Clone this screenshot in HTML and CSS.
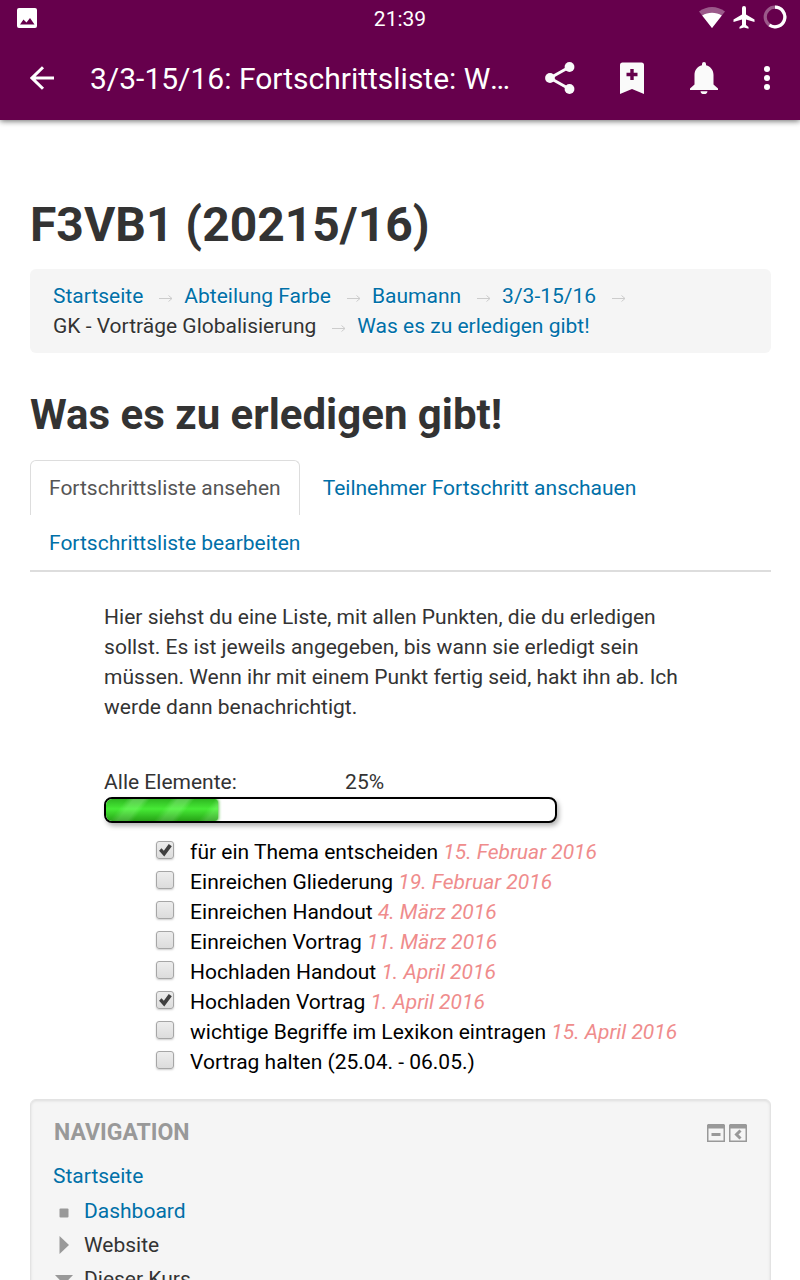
FILE: index.html
```html
<!DOCTYPE html>
<html lang="de">
<head>
<meta charset="utf-8">
<meta name="viewport" content="width=device-width, initial-scale=1">
<title>Was es zu erledigen gibt!</title>
<link rel="stylesheet" href="styles.css">
</head>
<body>
<svg class="sprite" aria-hidden="true">
  <symbol id="arrow" viewBox="0 0 14 8"><path d="M0 4.500H13M9.500 1.500L13 4.500L9.500 7.500" fill="none" stroke="#ccc" stroke-width="1"/></symbol>
</svg>
<header class="top">
  <div class="status">
    <svg class="status-photo" width="20" height="20" viewBox="0 0 20 20"><path fill="#fff" fill-rule="evenodd" d="M2 0H18a2 2 0 0 1 2 2V18a2 2 0 0 1-2 2H2a2 2 0 0 1-2-2V2a2 2 0 0 1 2-2ZM3 16.500H17.500L13 10L9.500 14.500L6.500 11.500Z"/></svg>
    <time class="clock">21:39</time>
    <div class="status-icons">
      <svg width="26" height="21" viewBox="0 0 26 21"><path fill="#fff" opacity=".35" d="M13 21L0 4.500C8-1.500 18-1.500 26 4.500Z"/><path fill="#fff" d="M13 21L3.200 8.600C9 4.800 17 4.800 22.800 8.600Z"/></svg>
      <svg width="22" height="23" viewBox="0 0 22 23"><path fill="#fff" d="M21.500 16V13.500L13 8.500V2a2 2 0 0 0-4 0V8.500L.5 13.500V16L9 13.500V19L6.500 21V22.800L11 21.600L15.500 22.800V21L13 19V13.500Z"/></svg>
      <svg width="24" height="24" viewBox="0 0 24 24"><circle cx="12" cy="12" r="9.800" fill="none" stroke="#fff" stroke-opacity=".35" stroke-width="3.200"/><path d="M12 2.200A9.800 9.800 0 1 1 6.400 20" fill="none" stroke="#fff" stroke-width="3.200"/></svg>
    </div>
  </div>
  <div class="toolbar">
    <button class="tool" aria-label="Zurück"><svg width="24" height="24" viewBox="0 0 24 24"><path d="M24 12H2M13 1.200L2 12L13 22.800" fill="none" stroke="#fff" stroke-width="3"/></svg></button>
    <div class="title">3/3-15/16: Fortschrittsliste: Was es zu erledigen gibt!</div>
    <div class="actions">
      <button class="tool" aria-label="Teilen"><svg width="30" height="32" viewBox="0 0 30 32"><path d="M24.500 5L5 16L24.500 27" fill="none" stroke="#fafafa" stroke-width="3"/><g fill="#fafafa"><circle cx="24.500" cy="5" r="4.900"/><circle cx="5" cy="16" r="4.900"/><circle cx="24.500" cy="27" r="4.900"/></g></svg></button>
      <button class="tool" aria-label="Lesezeichen hinzufügen"><svg width="24" height="32" viewBox="0 0 24 32"><path fill="#fafafa" d="M2.500 0.500H21.500A2.500 2.500 0 0 1 24 3V32L12 27L0 32V3A2.500 2.500 0 0 1 2.500 .5Z"/><path d="M12 7V18M6.500 12.500H17.500" stroke="#66004c" stroke-width="3.400"/></svg></button>
      <button class="tool" aria-label="Benachrichtigungen"><svg width="28" height="32" viewBox="0 0 28 32"><path fill="#fafafa" d="M14 0A2 2 0 0 1 16 2V3.200C20.500 4.200 23.500 8 23.500 13V22.500L28 26.500V28H0V26.500L4.500 22.500V13C4.500 8 7.500 4.200 12 3.200V2A2 2 0 0 1 14 0ZM10.500 29.200H17.500A3.500 3 0 0 1 10.500 29.200Z"/></svg></button>
      <button class="tool tool-more" aria-label="Menü"><svg width="6" height="24" viewBox="0 0 6 24"><g fill="#fff"><circle cx="3" cy="3" r="3"/><circle cx="3" cy="12" r="3"/><circle cx="3" cy="21" r="3"/></g></svg></button>
    </div>
  </div>
</header>
<main class="page">
  <h1 class="course">F3VB1 (20215/16)</h1>
  <nav aria-label="Pfad">
    <ol class="crumbs">
      <li><a href="#">Startseite</a><svg class="sep"><use href="#arrow"/></svg></li>
      <li><a href="#">Abteilung Farbe</a><svg class="sep"><use href="#arrow"/></svg></li>
      <li><a href="#">Baumann</a><svg class="sep"><use href="#arrow"/></svg></li>
      <li><a href="#">3/3-15/16</a><svg class="sep"><use href="#arrow"/></svg></li>
      <li>GK - Vorträge Globalisierung<svg class="sep"><use href="#arrow"/></svg></li>
      <li><a href="#">Was es zu erledigen gibt!</a></li>
    </ol>
  </nav>
  <h2 class="activity">Was es zu erledigen gibt!</h2>
  <nav class="tabs" aria-label="Ansichten">
    <a class="tab tab-active" href="#">Fortschrittsliste ansehen</a>
    <a class="tab" href="#">Teilnehmer Fortschritt anschauen</a>
    <a class="tab" href="#">Fortschrittsliste bearbeiten</a>
  </nav>
  <section class="checklist">
    <p class="intro">Hier siehst du eine Liste, mit allen Punkten, die du erledigen sollst. Es ist jeweils angegeben, bis wann sie erledigt sein müssen. Wenn ihr mit einem Punkt fertig seid, hakt ihn ab. Ich werde dann benachrichtigt.</p>
    <div class="progress-head"><span>Alle Elemente:</span><span>25%</span></div>
    <div class="progress" role="progressbar" aria-label="Alle Elemente" aria-valuenow="25" aria-valuemin="0" aria-valuemax="100"><div class="progress-fill" style="width:25%"></div></div>
    <ol class="items">
      <li><label><input type="checkbox" checked><span>für ein Thema entscheiden <i>15. Februar 2016</i></span></label></li>
      <li><label><input type="checkbox"><span>Einreichen Gliederung <i>19. Februar 2016</i></span></label></li>
      <li><label><input type="checkbox"><span>Einreichen Handout <i>4. März 2016</i></span></label></li>
      <li><label><input type="checkbox"><span>Einreichen Vortrag <i>11. März 2016</i></span></label></li>
      <li><label><input type="checkbox"><span>Hochladen Handout <i>1. April 2016</i></span></label></li>
      <li><label><input type="checkbox" checked><span>Hochladen Vortrag <i>1. April 2016</i></span></label></li>
      <li><label><input type="checkbox"><span>wichtige Begriffe im Lexikon eintragen <i>15. April 2016</i></span></label></li>
      <li><label><input type="checkbox"><span>Vortrag halten (25.04. - 06.05.)</span></label></li>
    </ol>
  </section>
  <aside class="block">
    <div class="block-head">
      <h2 class="block-title">Navigation</h2>
      <div class="block-tools">
        <button class="mini" aria-label="Block verbergen"><svg width="18" height="18" viewBox="0 0 18 18"><path fill="#999" fill-rule="evenodd" d="M1 0H17L18 1V18H0V1ZM1.500 4.500V16.500H16.500V4.500Z"/><path d="M4.500 10.500H13.500" stroke="#999" stroke-width="3"/></svg></button>
        <button class="mini" aria-label="Block andocken"><svg width="18" height="18" viewBox="0 0 18 18"><path fill="#999" fill-rule="evenodd" d="M1 0H17L18 1V18H0V1ZM1.500 4.500V16.500H16.500V4.500Z"/><path d="M11.500 6.500L7.500 10.500L11.500 14.500" fill="none" stroke="#999" stroke-width="3"/></svg></button>
      </div>
    </div>
    <ul class="tree">
      <li class="tree-root"><a href="#">Startseite</a></li>
      <li><svg width="18" height="18" viewBox="0 0 18 18"><rect x="4.500" y="6.500" width="9" height="9" rx="1" fill="#999"/></svg><a href="#">Dashboard</a></li>
      <li><svg width="18" height="18" viewBox="0 0 18 18"><path d="M4.500 0L14 9L4.500 18Z" fill="#999"/></svg><span>Website</span></li>
      <li><svg width="18" height="18" viewBox="0 0 18 18"><path d="M0 5H18L9 14.500Z" fill="#999"/></svg><span>Dieser Kurs</span></li>
    </ul>
  </aside>
</main>
</body>
</html>
```
FILE: styles.css
```css
* { box-sizing: border-box; }
body {
  margin: 0;
  height: 100vh;
  display: flex;
  flex-direction: column;
  background: #fff;
  color: #333;
  font: 21px/30px Roboto, "Noto Sans", sans-serif;
}
h1, h2, p, ol, ul { margin: 0; padding: 0; }
ol, ul { list-style: none; }
a { color: #0070a8; text-decoration: none; }
button { border: 0; padding: 0; background: none; cursor: pointer; }
svg { display: block; flex: none; }
.sprite { position: absolute; width: 0; height: 0; }

.top {
  flex: none;
  background: #66004c;
  color: #fff;
  box-shadow: 0 1px 6px rgba(0, 0, 0, .6);
  z-index: 1;
}
.status {
  display: grid;
  grid-template-columns: 1fr auto 1fr;
  align-items: center;
  height: 36px;
  padding: 0 13px;
}
.status-photo { margin-left: 4px; }
.clock { font-size: 21px; padding-top: 2px; }
.status-icons {
  display: flex;
  justify-content: flex-end;
  align-items: center;
  gap: 8px;
  padding-bottom: 2px;
}
.toolbar {
  display: flex;
  align-items: center;
  height: 84px;
  padding: 0 30px;
}
.tool { display: grid; place-items: center; height: 48px; width: 24px; }
.title {
  flex: 1;
  min-width: 0;
  margin-left: 36px;
  padding-top: 2px;
  font-size: 30px;
  line-height: 40px;
  white-space: nowrap;
  overflow: hidden;
  text-overflow: ellipsis;
}
.actions { display: flex; margin-left: 10px; }
.actions .tool { width: 72px; }
.actions .tool-more { width: 54px; margin-right: -24px; }

.page {
  flex: 1;
  min-height: 0;
  overflow-y: auto;
  scrollbar-width: none;
  padding: 75px 29px 30px 30px;
}
.course { font-size: 48px; line-height: 60px; margin-bottom: 14px; }
.crumbs {
  display: flex;
  flex-wrap: wrap;
  padding: 12px 23px;
  border-radius: 6px;
  background: #f5f5f5;
  text-shadow: 0 1px 0 #fff;
}
.crumbs li { display: flex; align-items: center; }
.sep { width: 14px; height: 8px; margin: 4px 11px 0 16px; }
.activity { font-size: 42px; line-height: 60px; margin: 32px 0 15px; }
.tabs {
  display: flex;
  flex-wrap: wrap;
  border-bottom: 2px solid #ddd;
}
.tab {
  padding: 12px 18px;
  margin-right: 4px;
  border: 1px solid transparent;
  border-bottom: 0;
  border-radius: 6px 6px 0 0;
}
.tab-active { color: #555; border-color: #ddd; }

.checklist { padding: 30px 10% 0; }
.intro { margin-bottom: 45px; }
.progress-head { display: grid; grid-template-columns: 241px 1fr; }
.progress {
  width: 453px;
  max-width: 100%;
  height: 26px;
  border: 2px solid #000;
  border-radius: 8px;
  overflow: hidden;
  background: #fff;
  box-shadow: 2px 3px 5px rgba(0, 0, 0, .3);
}
.progress-fill {
  height: 100%;
  border-radius: 0 3px 3px 0;
  background:
    linear-gradient(rgba(20, 120, 0, .25), rgba(80, 255, 60, .6) 45%, rgba(20, 120, 0, .5)),
    repeating-linear-gradient(128deg, #38cc2c 0 16px, #74e36c 22px 30px, #38cc2c 35px);
  box-shadow: 1px 0 3px rgba(60, 180, 40, .8);
}
.items { color: #000; padding: 14px 0 0 52px; margin-right: -30px; }
.items label { display: flex; }
.items i { color: #ef8c8c; }
.items input {
  appearance: none;
  flex: none;
  display: grid;
  place-items: center;
  width: 18px;
  height: 18px;
  margin: 4px 16px 0 0;
  border: 1px solid #a6a6a6;
  border-radius: 3px;
  background: linear-gradient(#ededed, #dcdcdc);
  box-shadow: 0 1px 2px rgba(0, 0, 0, .2);
}
.items input:checked::before {
  content: "";
  width: 14px;
  height: 14px;
  background: #404040;
  clip-path: polygon(7% 55%, 24% 38%, 41% 56%, 76% 7%, 98% 24%, 44% 96%);
}

.block {
  margin-top: 22px;
  padding: 17px 23px 16px 22px;
  border: 1px solid #e3e3e3;
  border-radius: 6px;
  background: #f5f5f5;
  box-shadow: inset 0 1px 3px rgba(0, 0, 0, .1);
}
.block-head { display: flex; justify-content: space-between; align-items: center; }
.block-title {
  padding: 1px 0 0 1px;
  color: #999;
  font-size: 23px;
  line-height: 30px;
  text-transform: uppercase;
}
.block-tools { display: flex; gap: 4px; }
.tree { padding-top: 10px; }
.tree li { display: flex; align-items: center; gap: 11px; height: 34px; }
.tree .tree-root { height: 36px; }
.tree li:not(.tree-root) { padding-left: 2px; }
```
